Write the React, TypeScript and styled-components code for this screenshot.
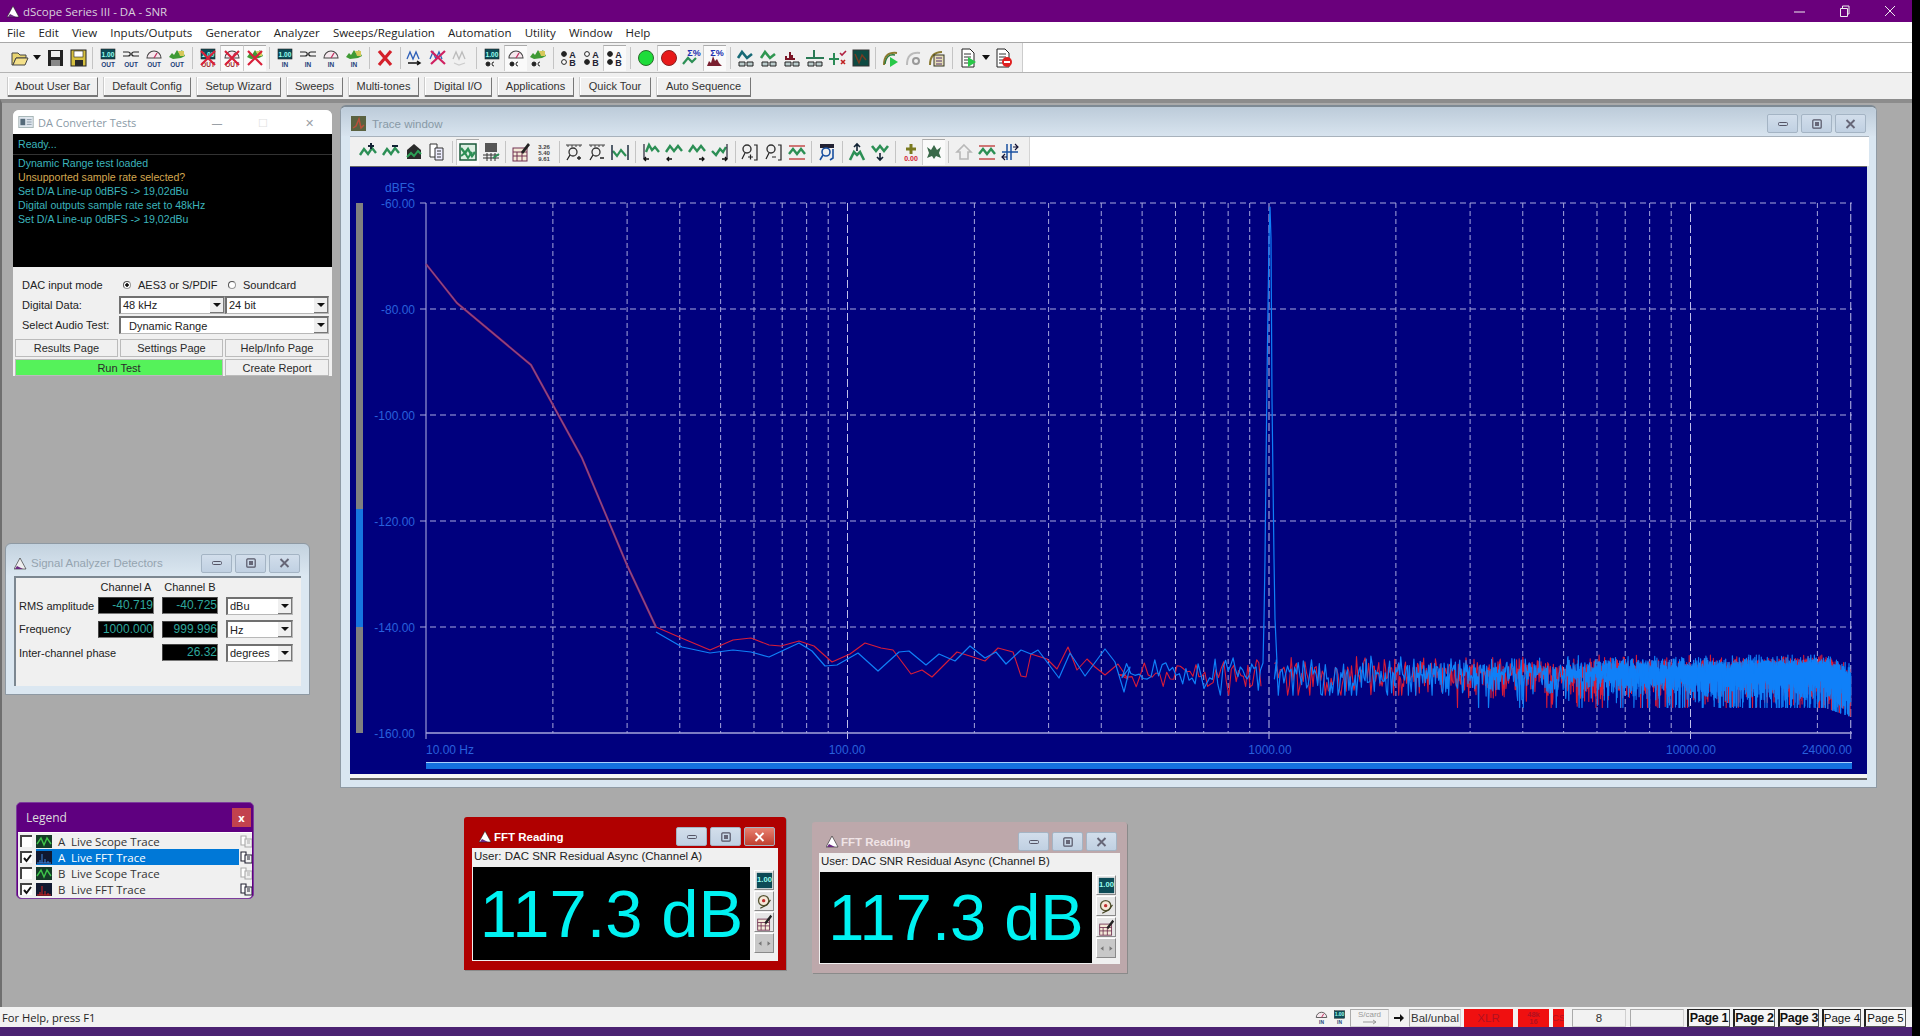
import React from 'react';
import styled, { createGlobalStyle } from 'styled-components';

const GlobalStyle = createGlobalStyle`
  html, body {
    margin: 0;
    padding: 0;
    background: #000;
    overflow: hidden;
  }
  #root {
    width: 1920px;
    height: 1036px;
  }
`;

const ARIAL = `"Liberation Sans", Arial, sans-serif`;
const SEGOE = `"Open Sans", "Noto Sans", sans-serif`;

/* ---------- app shell ---------- */

const Screen = styled.div`
  width: 1912px;
  height: 1036px;
  display: flex;
  flex-direction: column;
  background: #f0f0f0;
  font-family: ${ARIAL};
  color: #111;
`;

const TitleBar = styled.div`
  height: 22px;
  flex: none;
  background: #6a007c;
  color: #d9d0dc;
  display: flex;
  align-items: center;
  padding-left: 7px;
  font: 11.5px ${SEGOE};
`;

const TitleText = styled.span`
  margin-left: 3px;
  flex: 1;
`;

const SysButton = styled.span`
  width: 45px;
  display: flex;
  justify-content: center;
  color: #eee;
`;

const MenuBar = styled.div`
  height: 19px;
  flex: none;
  background: #fff;
  border-top: 1px solid #fff;
  border-bottom: 1px solid #a8a8a8;
  display: flex;
  align-items: center;
  padding-left: 7px;
  gap: 13.2px;
  font: 11.5px ${SEGOE};
  color: #222;
`;

const ToolRow = styled.div`
  height: 29px;
  flex: none;
  background: #fff;
  border-bottom: 1px solid #b4b4b4;
  display: flex;
`;

const ToolStrip = styled.div<{ $width: number }>`
  width: ${(p) => p.$width}px;
  background: #f0f0f0;
  border-right: 1px solid #ccc;
  display: flex;
  align-items: center;
  padding-left: 8px;
  box-sizing: border-box;
`;

const ToolButton = styled.div<{ $on?: boolean; $small?: boolean }>`
  width: ${(p) => (p.$small ? 12 : 23)}px;
  height: 26px;
  flex: none;
  box-sizing: border-box;
  display: flex;
  align-items: center;
  justify-content: center;
  ${(p) =>
    p.$on
      ? 'background: #fafafa; border-top: 1px solid #aaa; border-left: 1px solid #ccc;'
      : ''}
`;

const ToolSep = styled.div`
  width: 1px;
  height: 22px;
  margin: 0 3.4px;
  flex: none;
  background: #c4c4c4;
`;

const TraceSep = styled(ToolSep)`
  margin: 0 3px;
`;

const QuickBar = styled.div`
  height: 26px;
  flex: none;
  background: #f0f0f0;
  display: flex;
  gap: 6px;
  align-items: flex-end;
  padding: 0 0 2px 8px;
  box-sizing: border-box;
`;

const QuickButton = styled.div<{ $width: number }>`
  width: ${(p) => p.$width}px;
  height: 20px;
  box-sizing: border-box;
  background: #f0f0f0;
  border-right: 1px solid #777;
  border-bottom: 2px solid #777;
  border-top: 1px solid #fff;
  box-shadow: inset 1px 0 #fff, -1px 0 #ccc;
  padding-bottom: 1px;
  display: flex;
  align-items: center;
  justify-content: center;
  font-size: 11px;
  color: #333;
`;

const Desktop = styled.div`
  flex: 1;
  position: relative;
  background: #aaaaaa;
  border-top: 4px solid #8c8c8c;
  border-left: 2px solid #6f6f6f;
  overflow: hidden;
`;

/* ---------- status bar ---------- */

const StatusBar = styled.div`
  height: 20px;
  flex: none;
  background: #f2f2f2;
  display: flex;
  align-items: center;
  padding: 1px 6px 0 2px;
  box-sizing: border-box;
  font: 11.2px ${SEGOE};
  color: #222;
`;

const StatusHelp = styled.span`
  flex: 1;
`;

const StatusIcon = styled.span`
  width: 15px;
  height: 15px;
  margin-left: 3px;
  flex: none;
`;

const StatusArrow = styled.svg`
  margin: 0 5px;
  flex: none;
`;

const StatusCell = styled.div<{ $width: number; $red?: boolean; $gap?: number }>`
  width: ${(p) => p.$width}px;
  height: 18px;
  margin-left: ${(p) => p.$gap ?? 3}px;
  flex: none;
  box-sizing: border-box;
  display: flex;
  align-items: center;
  justify-content: center;
  font: 11.5px ${ARIAL};
  background: ${(p) => (p.$red ? '#f01010' : '#f2f2f2')};
  color: ${(p) => (p.$red ? '#b01020' : '#333')};
  border: ${(p) => (p.$red ? 'none' : '1px solid #d0d0d0')};
  border-top-color: #aaa;
  border-left-color: #aaa;
  white-space: nowrap;
  overflow: hidden;
`;

const CardStack = styled.span`
  display: flex;
  flex-direction: column;
  align-items: center;
  font-size: 8px;
  line-height: 8px;
  color: #999;
`;

const RateStack = styled.span`
  font-size: 7.5px;
  line-height: 7px;
  text-align: center;
  font-weight: bold;
`;

const TinyRed = styled.span`
  font-size: 9.5px;
`;

const PageTab = styled.div<{ $width: number; $bold?: boolean }>`
  width: ${(p) => p.$width}px;
  height: 18px;
  margin-left: 3px;
  flex: none;
  box-sizing: border-box;
  border: 1px solid #555;
  border-left: 2px solid #222;
  border-top-color: #222;
  background: #f6f6f6;
  display: flex;
  align-items: center;
  justify-content: center;
  font: ${(p) => (p.$bold ? 'bold 12.5px' : '11.5px')} ${ARIAL};
  letter-spacing: ${(p) => (p.$bold ? '-0.3px' : '0')};
  color: #111;
  white-space: nowrap;
`;

const BottomStrip = styled.div`
  height: 9px;
  flex: none;
  background: #4b2272;
`;

/* ---------- windows on the desktop ---------- */

type Box = { $x: number; $y: number; $w: number; $h: number };

const Win = styled.div<Box>`
  position: absolute;
  left: ${(p) => p.$x}px;
  top: ${(p) => p.$y}px;
  width: ${(p) => p.$w}px;
  height: ${(p) => p.$h}px;
  box-sizing: border-box;
  display: flex;
  flex-direction: column;
`;

const CtlRow = styled.div`
  display: flex;
  gap: 3px;
`;

const Ctl = styled.div<{ $w: number; $bg?: string }>`
  width: ${(p) => p.$w}px;
  height: 19px;
  box-sizing: border-box;
  border: 1px solid #a4b4c4;
  border-radius: 2px;
  background: ${(p) => p.$bg ?? 'linear-gradient(#d2deeb, #c0d0e2)'};
  display: flex;
  align-items: center;
  justify-content: center;
`;

/* trace window */

const TraceWin = styled(Win)`
  background: #d9e6f1;
  border: 1px solid #8f9aa4;
  border-top: 2px solid #7e8a94;
  border-radius: 6px 6px 0 0;
  padding: 0 9px 7px 9px;
`;

const TraceHead = styled.div`
  height: 29px;
  flex: none;
  box-sizing: border-box;
  margin: 0 -9px;
  padding: 4px 10px 0 10px;
  border-radius: 5px 5px 0 0;
  background: linear-gradient(#bccbd9, #d8e4ef);
  display: flex;
  align-items: center;
  font-size: 11.5px;
  color: #8899a6;
`;

const TraceTitle = styled.span`
  flex: 1;
  margin-left: 1px;
`;

const TraceTools = styled.div`
  height: 29px;
  flex: none;
  margin-right: -2px;
  background: #fff;
  border-top: 1px solid #a8b2bc;
  display: flex;
`;

const TraceStrip = styled(ToolStrip)`
  padding-left: 6px;
  border-right: 1px solid #d4d4d4;
`;

const TraceButton = styled(ToolButton)`
  width: 23.2px;
`;

const PlotSvg = styled.svg`
  display: block;
  flex: none;
  border-top: 1px solid #666;
`;

const PlotFoot = styled.div`
  flex: 1;
  background: #f4f4f4;
  border-bottom: 2px solid #666;
`;

/* DA converter tests */

const TestWin = styled(Win)`
  background: #f0f0f0;
  border-radius: 6px 6px 0 0;
`;

const WhiteHead = styled.div`
  height: 24px;
  flex: none;
  padding-left: 5px;
  border-radius: 6px 6px 0 0;
  background: #fff;
  display: flex;
  align-items: center;
  font: 11px ${SEGOE};
  color: #8a9aa6;
`;

const HeadText = styled.span`
  flex: 1;
  margin-left: 4px;
`;

const HeadGlyph = styled.span<{ $faint?: boolean }>`
  width: 46px;
  display: flex;
  justify-content: center;
  color: ${(p) => (p.$faint ? '#e0e0e0' : '#9aa0a6')};
`;

const ConsoleBox = styled.div`
  height: 133px;
  flex: none;
  background: #000;
  padding-left: 5px;
  font-size: 10.6px;
  line-height: 14px;
  color: #3cb4bc;
`;

const ConsoleHead = styled.div`
  height: 21px;
  margin-left: -5px;
  padding-left: 5px;
  box-sizing: border-box;
  border-bottom: 1px solid #333;
  line-height: 21px;
  margin-bottom: 1px;
`;

const ConsoleLine = styled.div<{ $warn?: boolean }>`
  color: ${(p) => (p.$warn ? '#d4a850' : '#3cb4bc')};
`;

const TestForm = styled.div`
  padding: 8px 1px 0 1px;
  font-size: 11px;
  color: #222;
  display: flex;
  flex-direction: column;
`;

const FormRow = styled.div<{ $h: number }>`
  height: ${(p) => p.$h}px;
  display: flex;
  align-items: center;
  padding-left: 8px;
`;

const FormLabel = styled.span`
  width: 97px;
  flex: none;
  white-space: nowrap;
`;

const Radio = styled.span<{ $on?: boolean; $lead?: number }>`
  width: 8px;
  height: 8px;
  margin-left: ${(p) => p.$lead ?? 0}px;
  margin-right: 7px;
  flex: none;
  border-radius: 50%;
  background: #fff;
  box-sizing: border-box;
  border: 1px solid #999;
  border-top-color: #555;
  border-left-color: #555;
  ${(p) => (p.$on ? 'background: radial-gradient(circle, #111 35%, #fff 45%);' : '')}
`;

const RadioText = styled.span<{ $w: number }>`
  width: ${(p) => p.$w}px;
  flex: none;
  white-space: nowrap;
`;

const ComboBox = styled.div<{ $w: number; $inset?: number }>`
  width: ${(p) => p.$w}px;
  height: 18px;
  flex: none;
  box-sizing: border-box;
  background: #fff;
  border: 1px solid #b8b8b8;
  border-top: 2px solid #707070;
  border-left: 2px solid #707070;
  padding-left: ${(p) => p.$inset ?? 2}px;
  display: flex;
  align-items: center;
  justify-content: space-between;
  font-size: 11px;
  color: #222;
  overflow: hidden;
`;

const ComboArrow = styled.span`
  width: 14px;
  height: 15px;
  flex: none;
  box-sizing: border-box;
  background: #efefef;
  border-right: 1px solid #777;
  border-bottom: 1px solid #777;
  display: flex;
  align-items: center;
  justify-content: center;
  &::after {
    content: '';
    border: 4px solid transparent;
    border-top: 4px solid #111;
    border-bottom: 0;
  }
`;

const ButtonRow = styled.div<{ $h: number; $top?: number }>`
  height: ${(p) => p.$h}px;
  display: flex;
  gap: 2px;
  padding-left: 1px;
  margin-top: ${(p) => p.$top ?? 0}px;
  margin-bottom: 2px;
`;

const FlatButton = styled.div<{ $w: number; $green?: boolean }>`
  width: ${(p) => p.$w}px;
  box-sizing: border-box;
  background: ${(p) => (p.$green ? '#55f25a' : '#f0f0f0')};
  border: 1px solid #8a8a8a;
  border-top-color: #fff;
  border-left-color: #fff;
  outline: 1px solid #bbb;
  outline-offset: -1px;
  display: flex;
  align-items: center;
  justify-content: center;
  font-size: 11px;
  color: #2a2a2a;
`;

/* detectors */

const DetectWin = styled(Win)`
  background: linear-gradient(#c3d2df 0, #dbe7f1 32px, #dbe7f1 100%);
  border: 1px solid #8e99a3;
  border-radius: 6px 6px 0 0;
  padding: 0 8px 8px 8px;
`;

const DetectHead = styled.div`
  height: 32px;
  flex: none;
  box-sizing: border-box;
  padding: 6px 1px 0 0;
  display: flex;
  align-items: center;
  font-size: 11.5px;
  color: #95a4b0;
`;

const DetectBody = styled.div`
  flex: 1;
  background: #f0f0f0;
  border-top: 2px solid #7c8791;
  border-left: 2px solid #7c8791;
  padding: 1px 0 0 3px;
  font-size: 11px;
  color: #222;
`;

const DetectGrid = styled.div<{ $row: number }>`
  display: grid;
  grid-template-columns: 71px 56px 56px 67px;
  grid-auto-rows: ${(p) => p.$row}px;
  column-gap: 8px;
  align-items: center;
`;

const ColHead = styled.span`
  text-align: center;
  white-space: nowrap;
`;

const RowLabel = styled.span`
  white-space: nowrap;
`;

const ReadOut = styled.span`
  height: 17px;
  box-sizing: border-box;
  background: #000;
  border: 1px solid #777;
  border-top-color: #444;
  border-left-color: #444;
  color: #2ea79c;
  font-size: 12px;
  line-height: 15px;
  text-align: right;
  overflow: hidden;
`;

/* legend */

const LegendWin = styled(Win)`
  background: #5f0080;
  border-radius: 5px;
  padding: 0 1px;
  border: 1px solid #7c3c9c;
`;

const LegendHead = styled.div`
  height: 29px;
  flex: none;
  padding: 0 1px 0 8px;
  display: flex;
  align-items: center;
  justify-content: space-between;
  font: 12px ${SEGOE};
  color: #ddd;
`;

const LegendClose = styled.span`
  width: 19px;
  height: 19px;
  background: #c2424e;
  color: #fff;
  font: bold 11px ${SEGOE};
  display: flex;
  align-items: center;
  justify-content: center;
`;

const LegendList = styled.div`
  flex: 1;
  background: #f0f0f0;
  border-top: 1px solid #fff;
  border-radius: 0 0 4px 4px;
  overflow: hidden;
`;

const LegendRow = styled.div`
  height: 16px;
  display: flex;
  align-items: center;
  padding-left: 2px;
  font: 11.5px ${SEGOE};
  color: #333;
`;

const LegendBox = styled.span`
  width: 12px;
  height: 12px;
  margin-right: 4px;
  flex: none;
  box-sizing: border-box;
  background: #fff;
  border-top: 2px solid #444;
  border-left: 2px solid #444;
  display: flex;
  align-items: center;
  justify-content: center;
`;

const LegendEntry = styled.span<{ $selected?: boolean }>`
  width: 203px;
  height: 16px;
  flex: none;
  display: flex;
  align-items: center;
  background: ${(p) => (p.$selected ? '#0078d7' : 'transparent')};
  color: ${(p) => (p.$selected ? '#fff' : '#333')};
  white-space: pre;
`;

const ChanLetter = styled.span`
  width: 13px;
  margin-left: 1px;
`;

/* FFT readings */

const ReadingWin = styled(Win)<{ $frame: string; $pad: number }>`
  background: ${(p) => p.$frame};
  border-radius: 3px 3px 0 0;
  padding: 0 ${(p) => p.$pad}px 9px ${(p) => p.$pad}px;
  box-shadow: 1px 1px 0 #8a8a8a;
`;

const ReadingHead = styled.div`
  height: 31px;
  flex: none;
  box-sizing: border-box;
  padding: 8px 3px 0 7px;
  display: flex;
  align-items: center;
  justify-content: space-between;
  font-size: 11.5px;
  font-weight: bold;
  color: #fff;
`;

const ReadingName = styled.span<{ $faint?: boolean }>`
  display: flex;
  align-items: center;
  gap: 2px;
  color: ${(p) => (p.$faint ? '#f0e4e6' : '#fff')};
`;

const ReadingSub = styled.div`
  height: 18px;
  flex: none;
  background: #f0f0f0;
  padding-left: 2px;
  font-size: 11.5px;
  line-height: 17px;
  color: #222;
`;

const ReadingBody = styled.div`
  flex: 1;
  display: flex;
  background: #f0f0f0;
  min-height: 0;
`;

const BigValue = styled.div<{ $size: number }>`
  flex: 1;
  margin: 1px 0 1px 1px;
  background: #000;
  color: #00f2f2;
  font: ${(p) => p.$size}px ${ARIAL};
  display: flex;
  align-items: center;
  justify-content: center;
  white-space: nowrap;
`;

const SideColumn = styled.div`
  width: 28px;
  flex: none;
  display: flex;
  flex-direction: column;
  align-items: center;
  padding-top: 4px;
  gap: 1px;
`;

const SideButton = styled.div<{ $off?: boolean }>`
  width: 20px;
  height: 20px;
  box-sizing: border-box;
  background: ${(p) => (p.$off ? '#c8c8c8' : '#e6e6e6')};
  border: 1px solid #8a8a8a;
  border-top-color: #fff;
  border-left-color: #fff;
  display: flex;
  align-items: center;
  justify-content: center;
`;

/* ---------- small icons ---------- */

const Glyph: React.FC<{ size?: number; children: React.ReactNode }> = ({
  size = 20,
  children,
}) => (
  <svg width={size} height={size} viewBox="0 0 20 20" fill="none">
    {children}
  </svg>
);

const GREEN = '#2c8f55';
const wave = (color = GREEN, w = 2.4, d = 'M2 13l4-6 4 5 4-6 4 5') => (
  <path d={d} stroke={color} strokeWidth={w} />
);
const tag = (t: string, c = '#1d3f78') => (
  <text x="10" y="19" fontSize="6.5" fontWeight="bold" fontFamily={ARIAL} textAnchor="middle" fill={c}>
    {t}
  </text>
);
const cross = <path d="M3 3l14 14M17 3L3 17" stroke="#d8203a" strokeWidth="2.2" />;
const arrowL = <path d="M8 17H3m2-2-2 2 2 2" stroke="#111" strokeWidth="1.3" />;
const arrowR = <path d="M12 17h5m-2-2 2 2-2 2" stroke="#111" strokeWidth="1.3" />;

const ledTop = (
  <>
    <rect x="3" y="1" width="14" height="10" fill="#0c4a56" stroke="#222" strokeWidth=".6" />
    <text x="10" y="8.5" fontSize="6.6" fontWeight="bold" fontFamily={ARIAL} textAnchor="middle" fill="#9fe">
      1.00
    </text>
  </>
);
const connTop = <path d="M2 4h5c3 0 3 4 0 4H2m16-4h-5c-3 0-3 4 0 4h5" stroke="#222" strokeWidth="1.2" />;
const gaugeTop = (
  <>
    <path d="M3 10a7 7 0 1 1 14 0z" fill="#f6e8ee" stroke="#444" strokeWidth="1.1" />
    <path d="M10 10l3-5" stroke="#c03060" strokeWidth="1.3" />
  </>
);
const treeTop = (
  <>
    <path d="M2 9l3-4 2 2 3-5 2 3 3-3 3 6-4 2-8 1z" fill="#3f9a35" />
    <path d="M11 3h6v5h-4z" fill="#d6c85a" />
  </>
);
const abRadio = (onA: boolean, onB: boolean, s = 'AB') => (
  <>
    <circle cx="5" cy="6" r="2.4" stroke="#222" fill={onA ? '#222' : '#fff'} />
    <circle cx="5" cy="14" r="2.4" stroke="#222" fill={onB ? '#222' : '#fff'} />
    <text x="13.5" y="9.5" fontSize="9" fontWeight="bold" fontFamily={ARIAL} textAnchor="middle" fill="#223">
      {s[0]}
    </text>
    <text x="13.5" y="18" fontSize="9" fontWeight="bold" fontFamily={ARIAL} textAnchor="middle" fill="#223">
      {s[1]}
    </text>
  </>
);
const radioPair = (
  <>
    <circle cx="6" cy="16" r="2" stroke="#222" fill="#222" />
    <path d="M12 18a2 2 0 0 1 0-4" stroke="#222" />
  </>
);
const doc = (
  <>
    <path d="M4 1h8l4 4v14H4z" fill="#fff" stroke="#222" />
    <path d="M6 6h7M6 9h7M6 12h6M6 15h6" stroke="#333" />
  </>
);

const icons: Record<string, React.ReactNode> = {
  folder: (
    <>
      <path d="M2 5h6l2 2h6v3H6l-3 7H2z" fill="#e8d470" stroke="#444" />
      <path d="M6 10h12l-3 7H3z" fill="#f4e08a" stroke="#444" />
    </>
  ),
  save: (
    <>
      <rect x="3" y="2" width="15" height="16" fill="#222" />
      <rect x="6" y="3" width="9" height="6" fill="#eee" />
      <rect x="6" y="12" width="9" height="6" fill="#888" />
    </>
  ),
  saveY: (
    <>
      <rect x="3" y="2" width="15" height="16" fill="#d6c040" stroke="#222" />
      <rect x="6" y="3" width="9" height="6" fill="#fff" stroke="#222" strokeWidth=".6" />
      <rect x="7" y="12" width="8" height="6" fill="#2a2a2a" />
    </>
  ),
  ledOut: <>{ledTop}{tag('OUT')}</>,
  connOut: <>{connTop}{tag('OUT')}</>,
  gaugeOut: <>{gaugeTop}{tag('OUT')}</>,
  treeOut: <>{treeTop}{tag('OUT')}</>,
  ledOutX: <>{ledTop}{tag('OUT', '#a03030')}{cross}</>,
  gaugeOutX: <>{gaugeTop}{tag('OUT', '#a03030')}{cross}</>,
  treeOutX: <>{treeTop}{cross}</>,
  ledIn: <>{ledTop}{tag('IN')}</>,
  connIn: <>{connTop}{tag('IN')}</>,
  gaugeIn: <>{gaugeTop}{tag('IN')}</>,
  treeIn: <>{treeTop}{tag('IN')}</>,
  redX: <path d="M4 3l12 14M16 3L4 17" stroke="#d4202a" strokeWidth="3.2" />,
  scope: (
    <>
      {wave('#2d5fb8', 1.3, 'M2 11l3-7 3 7 3-7 3 7')}
      <path d="M3 15h12m-3-2 3 2-3 2" stroke="#111" strokeWidth="1.5" />
    </>
  ),
  scopeX: (
    <>
      {wave('#2d5fb8', 1.3, 'M2 11l3-7 3 7 3-7 3 7')}
      <path d="M3 3l14 13M17 3L3 16" stroke="#d02060" strokeWidth="2.2" />
    </>
  ),
  scopeOff: (
    <>
      {wave('#bbb', 1.3, 'M2 11l3-7 3 7 3-7 3 7')}
      <path d="M3 15l5 2 6-2" stroke="#ccc" strokeWidth="1.3" />
    </>
  ),
  ledRad: <>{ledTop}{radioPair}</>,
  gaugeRad: <>{gaugeTop}{radioPair}</>,
  treeRad: <>{treeTop}{radioPair}</>,
  abA: abRadio(true, false),
  abB: abRadio(false, true),
  abAB: abRadio(true, true),
  green: <circle cx="10" cy="10" r="7.5" fill="#1edc3a" stroke="#2a6a2a" />,
  red: <circle cx="10" cy="10" r="7.5" fill="#e81a1a" stroke="#8a2020" />,
  sigma: (
    <>
      {wave(GREEN, 2.2, 'M1 16l5-6 4 4 4-4')}
      <text x="12" y="8" fontSize="9" fontWeight="bold" fontFamily={ARIAL} textAnchor="middle" fill="#2030b0">
        Σ%
      </text>
    </>
  ),
  sigmaPeak: (
    <>
      <path d="M2 18l2-5 2 2 2-7 2 5 2-2 2 4 3 3z" fill="#7a2030" />
      <text x="12" y="8" fontSize="9" fontWeight="bold" fontFamily={ARIAL} textAnchor="middle" fill="#2030b0">
        Σ%
      </text>
    </>
  ),
  bank1: (
    <>
      {wave('#176a76', 2.6, 'M2 10l4-6 5 6 5-4')}
      <path d="M3 14h6v4H3zm8 0h6v4h-6z" fill="#bcc" stroke="#222" />
    </>
  ),
  bank2: (
    <>
      {wave('#2f9650', 2.6, 'M2 10l4-6 5 6 5-4')}
      <path d="M3 14h6v4H3zm8 0h6v4h-6z" fill="#bcc" stroke="#222" />
    </>
  ),
  bank3: (
    <>
      <path d="M1 12h2V8h2v2h2V4h2v3h2v3h2v2h4z" fill="#7a1526" />
      <path d="M3 14h6v4H3zm8 0h6v4h-6z" fill="#bcc" stroke="#222" />
    </>
  ),
  bank4: (
    <>
      <path d="M1 10h18M9 2v8" stroke="#2a7a55" strokeWidth="2" />
      <path d="M3 14h6v4H3zm8 0h6v4h-6z" fill="#bcc" stroke="#222" />
    </>
  ),
  check: (
    <>
      <path d="M1 11h10M6 5v12" stroke="#2a8a55" strokeWidth="2" />
      <path d="M12 5l2 2 4-4" stroke="#b02040" strokeWidth="1.6" />
      <path d="M13 12l4 4m0-4-4 4" stroke="#c02020" strokeWidth="1.6" />
    </>
  ),
  scr: (
    <>
      <rect x="2" y="2" width="16" height="16" fill="#0e4a42" stroke="#333" />
      <path d="M4 6l4 9 3-8 4 5" stroke="#7a3a20" strokeWidth="1.4" />
    </>
  ),
  runA: (
    <>
      <path d="M3 17c0-9 4-13 13-12" stroke="#8a7a30" strokeWidth="2" />
      <path d="M4 16c1-7 4-10 10-9" stroke="#2a7a3a" strokeWidth="1.4" />
      <path d="M9 9l8 5-8 5z" fill="#28c848" />
    </>
  ),
  runOff: (
    <>
      <path d="M3 17c0-9 4-13 13-12" stroke="#bbb" strokeWidth="2" />
      <circle cx="12" cy="13" r="3" stroke="#999" strokeWidth="2" />
    </>
  ),
  runEdit: (
    <>
      <path d="M3 17c0-9 4-13 12-13" stroke="#8a7a30" strokeWidth="2" />
      <rect x="7" y="7" width="10" height="11" fill="#e6ddb8" stroke="#332" />
      <path d="M9 10h6M9 13h6M9 16h6" stroke="#503070" />
    </>
  ),
  docRun: <>{doc}<path d="M10 9l8 5-8 5z" fill="#28c848" /></>,
  docStop: (
    <>
      {doc}
      <circle cx="14" cy="14" r="5" fill="#e02020" />
      <path d="M11 14h6" stroke="#fff" strokeWidth="2" />
    </>
  ),
  waveAdd: <>{wave()}<path d="M13 1v6M10 4h6" stroke="#123" strokeWidth="2" /></>,
  waveSub: <>{wave()}<path d="M11 4h6" stroke="#123" strokeWidth="2" /></>,
  waveSave: (
    <>
      <path d="M3 17V8l7-6 7 6v9z" fill="#2a2a2a" />
      {wave('#2c9f55', 2, 'M3 15l4-4 3 3 4-5 3 3')}
    </>
  ),
  copy: (
    <>
      <path d="M3 2h7v13H3z" fill="#fff" stroke="#333" />
      <path d="M8 6h8v12H8z" fill="#eef" stroke="#333" />
      <path d="M10 9h4M10 12h4M10 15h4" stroke="#333" />
    </>
  ),
  gridWave: (
    <>
      <rect x="2" y="2" width="16" height="16" fill="#dcefe2" stroke="#1a5a3a" strokeWidth="1.5" />
      {wave(GREEN, 2.4, 'M3 6l4 5 3-4 4 7 3-4')}
      {wave(GREEN, 2, 'M3 14l4-3 3 5 4-6')}
    </>
  ),
  gridTable: (
    <>
      <path d="M4 1h12v9H4z" fill="#555" />
      <path d="M2 13h16M2 16h16M6 11v8M10 11v8M14 11v8" stroke="#333" />
      <path d="M12 16l6-4" stroke={GREEN} strokeWidth="2" />
    </>
  ),
  calc: (
    <>
      <rect x="2" y="6" width="14" height="13" fill="#f4ead8" stroke="#703050" />
      <path d="M2 10h14M6 10v9M11 10v9M2 14h14" stroke="#703050" />
      <path d="M10 10l7-9 2 2-7 9z" fill="#222" />
    </>
  ),
  nums: (
    <text x="10" y="7" fontSize="6" fontWeight="bold" fontFamily={ARIAL} textAnchor="middle" fill="#444">
      3.26
      <tspan x="10" dy="6">5.40</tspan>
      <tspan x="10" dy="6">9.61</tspan>
    </text>
  ),
  rulePlus: (
    <>
      <path d="M2 3h16M4 3v2M8 3v2M12 3v2M16 3v2" stroke="#444" />
      <circle cx="9" cy="10" r="4" stroke="#333" strokeWidth="1.3" />
      <path d="M6 13l-3 5M13 16h4M15 14v4" stroke="#222" strokeWidth="1.3" />
    </>
  ),
  ruleMinus: (
    <>
      <path d="M2 3h16M4 3v2M8 3v2M12 3v2M16 3v2" stroke="#444" />
      <circle cx="9" cy="10" r="4" stroke="#333" strokeWidth="1.3" />
      <path d="M6 13l-3 5M13 16h4" stroke="#222" strokeWidth="1.3" />
    </>
  ),
  waveBars: (
    <>
      {wave(GREEN, 2.2, 'M3 9l4 5 4-6 5 6')}
      <path d="M2 3v15M18 3v15" stroke="#123" strokeWidth="1.4" />
    </>
  ),
  wL: <>{wave(GREEN, 2.4, 'M5 10l3-7 3 5 3-3 4 5')}<path d="M3 2v15" stroke="#223" strokeWidth="1.2" />{arrowL}</>,
  wD: <>{wave(GREEN, 2.4, 'M2 10l4-6 4 5 4-5 4 5')}{arrowL}</>,
  wR: <>{wave(GREEN, 2.4, 'M2 10l4-6 4 5 4-5 4 5')}{arrowR}</>,
  wRb: <>{wave(GREEN, 2.4, 'M2 9l4 4 4-6 3 3 3-5')}<path d="M17 2v15" stroke="#223" strokeWidth="1.2" />{arrowR}</>,
  magPlus: (
    <>
      <circle cx="7" cy="7" r="4" stroke="#333" strokeWidth="1.4" />
      <path d="M5 11l-3 6M8 15h5M10.5 12.5v5M14 3h3v15h-3" stroke="#222" strokeWidth="1.2" />
    </>
  ),
  magMinus: (
    <>
      <circle cx="7" cy="7" r="4" stroke="#333" strokeWidth="1.4" />
      <path d="M5 11l-3 6M8 15h4M14 3h3v15h-3" stroke="#222" strokeWidth="1.2" />
    </>
  ),
  waveLines: (
    <>
      <path d="M2 4h16" stroke="#c04040" strokeWidth="1.4" />
      {wave(GREEN, 2.4, 'M2 12l4-5 4 5 4-5 4 5')}
      <path d="M2 17h16" stroke="#c04040" strokeWidth="1.4" />
    </>
  ),
  magBlue: (
    <>
      <path d="M3 2h14v4H3z" fill="#223" />
      <circle cx="9" cy="10" r="4" stroke="#1a50a0" strokeWidth="1.6" />
      <path d="M6 13l-3 5M16 7v9l-3 2" stroke="#1a50a0" strokeWidth="1.6" />
    </>
  ),
  wUp: <>{wave(GREEN, 2.6, 'M3 18l4-8 3 3 3-3 4 8')}<path d="M10 9V2m-3 3 3-3 3 3" stroke="#123" strokeWidth="1.6" /></>,
  wDn: <>{wave(GREEN, 2.6, 'M2 4l4 5 4-5 4 5 4-5')}<path d="M10 11v7m-3-3 3 3 3-3" stroke="#123" strokeWidth="1.6" /></>,
  zero: (
    <>
      <path d="M10 2v10M5 7h10" stroke="#7a7a20" strokeWidth="3" />
      <text x="10" y="19" fontSize="7" fontWeight="bold" fontFamily={ARIAL} textAnchor="middle" fill="#d02030">
        0.00
      </text>
    </>
  ),
  star: <path d="M3 5l4 3 3-5 3 5 4-3-2 6 2 5-5-2-2 3-2-3-5 2 2-5z" fill="#3a6a4a" />,
  homeOff: <path d="M10 3l7 7h-3v7H6v-7H3z" stroke="#b8b8b8" strokeWidth="1.6" />,
  bars: (
    <>
      <path d="M7 2v16M11 2v16" stroke="#1a50a0" strokeWidth="1.5" />
      <path d="M2 10h16" stroke="#1a50a0" strokeWidth="1.5" />
      <path d="M13 5h5m-3-3 3 3-3 3M7 15H2m3-3-3 3 3 3" stroke="#113" strokeWidth="1.2" />
    </>
  ),
};

const DropTriangle = () => (
  <svg width="8" height="5" viewBox="0 0 8 5">
    <path d="M0 0h8L4 5z" fill="#111" />
  </svg>
);

const DashIcon = () => (
  <svg width="10" height="6" viewBox="0 0 10 6" fill="none">
    <rect x=".5" y="1.5" width="9" height="3" rx="1" stroke="#556" />
  </svg>
);
const RestoreIcon = () => (
  <svg width="10" height="10" viewBox="0 0 10 10" fill="none">
    <rect x=".8" y=".8" width="8.4" height="8.4" rx="1" stroke="#556" strokeWidth="1.2" />
    <rect x="3" y="3" width="4" height="4" fill="#667" />
  </svg>
);
const CloseIcon: React.FC<{ color?: string }> = ({ color = '#667' }) => (
  <svg width="11" height="10" viewBox="0 0 11 10" fill="none">
    <path d="M1.500 1l8 8M9.500 1l-8 8" stroke={color} strokeWidth="1.9" />
  </svg>
);

const Warn: React.FC<{ fill?: string }> = ({ fill = '#fff' }) => (
  <svg width="13" height="13" viewBox="0 0 13 13">
    <path d="M6 1l6 11H0z" fill={fill} stroke="#222" strokeWidth=".6" />
    <path d="M3 9l6 3H1z" fill="#6a2a80" />
  </svg>
);

const TraceGlyph = styled.svg`
  flex: none;
  margin-right: 5px;
`;

const TraceIcon: React.FC<{ mode: 'wave' | 'blue' | 'red' }> = ({ mode }) => (
  <TraceGlyph width="16" height="13" viewBox="0 0 16 13" fill="none">
    <rect width="16" height="13" fill={mode === 'wave' ? '#143a26' : '#101830'} />
    {mode === 'wave' ? (
      <path d="M1 9l4-6 3 7 3-7 4 6" stroke="#3ec44a" strokeWidth="1.4" />
    ) : (
      <path d="M1 12h14M6 12V3M4 12V9M9 12V8M12 12v-2" stroke={mode === 'blue' ? '#3a86e0' : '#d82020'} />
    )}
  </TraceGlyph>
);

const TraceLogo = () => (
  <TraceGlyph width="15" height="15" viewBox="0 0 15 15" fill="none">
    <rect width="15" height="15" fill="#5a6240" />
    <path d="M2 12l3-2 3-7 2 9 3-3" stroke="#b8503a" strokeWidth="1.5" />
  </TraceGlyph>
);

const CopyGlyph = styled.svg`
  flex: none;
  margin-left: 1px;
`;

const CopyIcon: React.FC<{ faint?: boolean }> = ({ faint }) => (
  <CopyGlyph width="13" height="13" viewBox="0 0 13 13" fill="none">
    <g stroke={faint ? '#aaa' : '#223'} strokeWidth="1.1">
      <path d="M1 1h5v9H1z" fill="#fff" />
      <path d="M5 4h7v8H5z" fill="#f0f0f0" />
      <path d="M7 6h3M7 8h3" />
    </g>
  </CopyGlyph>
);

/* ---------- toolbars data ---------- */

type ToolItem = string | { k: string; on?: boolean; small?: boolean };

const mainTools: ToolItem[] = [
  'folder', { k: 'drop', small: true }, 'save', 'saveY', '|',
  'ledOut', 'connOut', 'gaugeOut', 'treeOut', '|',
  'ledOutX', { k: 'gaugeOutX', on: true }, { k: 'treeOutX', on: true }, '|',
  'ledIn', 'connIn', 'gaugeIn', 'treeIn', '|',
  'redX', '|',
  'scope', 'scopeX', 'scopeOff', '|',
  'ledRad', { k: 'gaugeRad', on: true }, 'treeRad', '|',
  'abA', 'abB', { k: 'abAB', on: true }, '|',
  'green', { k: 'red', on: true }, 'sigma', { k: 'sigmaPeak', on: true }, '|',
  'bank1', 'bank2', 'bank3', 'bank4', 'check', 'scr', '|',
  'runA', 'runOff', 'runEdit', '|',
  'docRun', { k: 'drop', small: true }, 'docStop',
];

const traceTools: ToolItem[] = [
  'waveAdd', 'waveSub', 'waveSave', 'copy', '|',
  { k: 'gridWave', on: true }, 'gridTable', '|',
  'calc', 'nums', '|',
  'rulePlus', 'ruleMinus', 'waveBars', '|',
  'wL', 'wD', 'wR', 'wRb', '|',
  'magPlus', 'magMinus', 'waveLines', '|',
  'magBlue', '|',
  'wUp', 'wDn', '|',
  'zero', { k: 'star', on: true }, '|',
  'homeOff', 'waveLines', 'bars',
];

const renderTools = (items: ToolItem[], Btn: typeof ToolButton, Sep: typeof ToolSep) =>
  items.map((it, i) => {
    if (it === '|') return <Sep key={i} />;
    const o = typeof it === 'string' ? { k: it } : it;
    return (
      <Btn key={i} $on={o.on} $small={o.small}>
        {o.k === 'drop' ? <DropTriangle /> : <Glyph>{icons[o.k]}</Glyph>}
      </Btn>
    );
  });

const menus = [
  'File', 'Edit', 'View', 'Inputs/Outputs', 'Generator', 'Analyzer',
  'Sweeps/Regulation', 'Automation', 'Utility', 'Window', 'Help',
];

const quickButtons: [string, number][] = [
  ['About User Bar', 90], ['Default Config', 87], ['Setup Wizard', 84],
  ['Sweeps', 56], ['Multi-tones', 70], ['Digital I/O', 67],
  ['Applications', 76], ['Quick Tour', 71], ['Auto Sequence', 94],
];

/* ---------- chart data ---------- */

const X10 = 426;
const DECADE = 421.5;
const xOf = (f: number) => X10 + DECADE * Math.log10(f / 10);
const yOf = (db: number) => 204 + (-60 - db) * 5.3;

const rng = (seed: number) => () => {
  seed = (seed + 0x6d2b79f5) | 0;
  let t = Math.imul(seed ^ (seed >>> 15), 1 | seed);
  t = (t + Math.imul(t ^ (t >>> 7), 61 | t)) ^ t;
  return ((t ^ (t >>> 14)) >>> 0) / 4294967296;
};

const toPath = (pts: number[][]) =>
  pts.map((p, i) => `${i ? 'L' : 'M'}${p[0].toFixed(1)} ${p[1].toFixed(1)}`).join('');

// FFT noise floor, bins are linear in frequency so they bunch up to the right
const noise = (seed: number, fromHz: number, toHz: number) => {
  const r = rng(seed);
  const pts: number[][] = [];
  for (let f = fromHz; f <= toHz; f += 11) {
    const x = xOf(f);
    const centre = 672 + (x > 1825 ? (x - 1825) * 0.35 : 0);
    const deepest = x < 1450 ? 0.94 : 0.985;
    const u = Math.min(Math.max(r(), 0.002), deepest);
    pts.push([x, centre - 20 * Math.log10(-Math.log(u))]);
  }
  return pts;
};

const sharedRise = [[426, 265], [457, 304], [531, 366], [582, 459], [627, 566], [656, 628]];

const redLow = [
  [656, 628], [679, 638], [710, 651], [733, 641], [751, 639], [769, 646], [781, 647],
  [799, 642], [814, 647], [832, 663], [850, 655], [865, 644], [881, 649], [893, 651],
  [911, 675], [922, 671], [932, 678], [957, 653], [973, 658], [985, 662], [998, 649],
  [1013, 653], [1021, 677], [1026, 678], [1031, 655], [1047, 660], [1057, 670], [1068, 648],
  [1077, 671], [1087, 660], [1095, 668], [1105, 676], [1118, 665], [1128, 680],
];

const blueLow = [
  [656, 633], [682, 648], [710, 654], [733, 651], [751, 653], [769, 658], [799, 644],
  [812, 652], [825, 667], [837, 666], [858, 654], [878, 672], [899, 653], [909, 652],
  [926, 666], [939, 655], [955, 662], [970, 647], [985, 659], [996, 653], [1006, 665],
  [1021, 651], [1031, 655], [1038, 651], [1059, 679], [1070, 654], [1085, 677], [1105, 650],
  [1115, 663], [1124, 693], [1130, 668],
];

const bluePeak = [
  [1263, 664], [1264, 620], [1265, 560], [1267, 380], [1269, 240], [1270, 208], [1271, 240],
  [1272, 400], [1274, 560], [1275, 620], [1277, 664],
];

const redPath = toPath([
  ...redLow,
  ...noise(11, 440, 960),
]) + toPath(noise(23, 1030, 24000));
const bluePath = toPath([
  ...blueLow,
  ...noise(47, 448, 960),
  ...bluePeak,
  ...noise(91, 1030, 24000),
]);
// second pass over the top end, the blue band reads as solid there
const blueDense = toPath(noise(131, 6000, 24000));

const vLines: number[] = [];
[10, 100, 1000, 10000].forEach((d) => {
  for (let m = 2; m <= 9; m++) if (d * m <= 24000) vLines.push(d * m);
});

const BLUE_TEXT = '#2860dc';

const Chart = () => (
  <PlotSvg width={1517} height={607} viewBox="350 168 1517 607">
    <rect x="350" y="168" width="1517" height="607" fill="#00007e" />
    <rect x="356" y="204" width="7" height="530" fill="#808080" />
    <rect x="356" y="510" width="7" height="118" fill="#1676e0" />
    {[-60, -80, -100, -120, -140, -160].map((db) => (
      <g key={db}>
        {db !== -160 && (
          <line x1={420} x2={1852} y1={yOf(db)} y2={yOf(db)} stroke="#aaaade" strokeDasharray="6 4" />
        )}
        <text x="415" y={yOf(db) + 4.5} fontSize="12" fontFamily={ARIAL} textAnchor="end" fill={BLUE_TEXT}>
          {db}.00
        </text>
      </g>
    ))}
    <text x="415" y="193" fontSize="12" fontFamily={ARIAL} textAnchor="end" fill={BLUE_TEXT}>
      dBFS
    </text>
    <line x1={X10} x2={X10} y1={204} y2={740} stroke="#b4b4e4" />
    {vLines.map((f) => (
      <line key={f} x1={xOf(f)} x2={xOf(f)} y1={204} y2={734} stroke="#a6a6dc" strokeDasharray="5 3" />
    ))}
    {[100, 1000, 10000, 24000].map((f) => (
      <line key={f} x1={xOf(f)} x2={xOf(f)} y1={204} y2={741} stroke="#c0c0ea" strokeDasharray="8 3" />
    ))}
    <line x1={X10} x2={1852} y1={734} y2={734} stroke="#a4a4dc" strokeWidth="1.5" />
    <path d={toPath(sharedRise)} stroke="#b02850" strokeWidth="2" fill="none" />
    <path d={toPath(sharedRise)} stroke="#3a78e8" strokeOpacity=".55" strokeWidth="1" fill="none" />
    <path d={redPath} stroke="#d81c38" strokeWidth="1.1" fill="none" strokeLinejoin="round" />
    <path d={bluePath} stroke="#0f80f8" strokeWidth="1.2" fill="none" strokeLinejoin="round" />
    <path d={blueDense} stroke="#0f80f8" strokeWidth="1.1" fill="none" strokeLinejoin="round" />
    <text x="426" y="755" fontSize="12" fontFamily={ARIAL} fill={BLUE_TEXT}>10.00 Hz</text>
    <text x="847" y="755" fontSize="12" fontFamily={ARIAL} textAnchor="middle" fill={BLUE_TEXT}>100.00</text>
    <text x="1270" y="755" fontSize="12" fontFamily={ARIAL} textAnchor="middle" fill={BLUE_TEXT}>1000.00</text>
    <text x="1691" y="755" fontSize="12" fontFamily={ARIAL} textAnchor="middle" fill={BLUE_TEXT}>10000.00</text>
    <text x="1852" y="755" fontSize="12" fontFamily={ARIAL} textAnchor="end" fill={BLUE_TEXT}>24000.00</text>
    <rect x="426" y="763" width="1426" height="7" fill="#1470e0" />
    <rect x="426" y="763" width="1426" height="1" fill="#a8d0ff" />
  </PlotSvg>
);

/* ---------- parts ---------- */

const Combo: React.FC<{ w: number; value: string; inset?: number }> = ({ w, value, inset }) => (
  <ComboBox $w={w} $inset={inset}>
    {value}
    <ComboArrow />
  </ComboBox>
);

const WindowButtons: React.FC<{ w: number; closeBg?: string; closeColor?: string }> = ({
  w,
  closeBg,
  closeColor,
}) => (
  <CtlRow>
    <Ctl $w={w}><DashIcon /></Ctl>
    <Ctl $w={w}><RestoreIcon /></Ctl>
    <Ctl $w={w} $bg={closeBg}><CloseIcon color={closeColor} /></Ctl>
  </CtlRow>
);

const ledIcon = (
  <Glyph size={17}>
    <rect x="1" y="1" width="18" height="18" fill="#0c4a56" />
    <text x="10" y="12" fontSize="9" fontWeight="bold" fontFamily={ARIAL} textAnchor="middle" fill="#9fe">1.00</text>
  </Glyph>
);
const dialIcon = (
  <Glyph size={17}>
    <circle cx="9" cy="9" r="6" fill="#f6e8d8" stroke="#553" strokeWidth="1.5" />
    <circle cx="9" cy="9" r="2" fill="#c03030" />
    <path d="M5 18l8-4 4-6" stroke="#442" strokeWidth="1.4" />
  </Glyph>
);

const Reading: React.FC<{
  box: Box;
  frame: string;
  pad: number;
  channel: string;
  closeBg: string;
  closeColor: string;
  size: number;
  faint?: boolean;
}> = ({ box, frame, pad, channel, closeBg, closeColor, size, faint }) => (
  <ReadingWin {...box} $frame={frame} $pad={pad}>
    <ReadingHead>
      <ReadingName $faint={faint}>
        <Warn />
        FFT Reading
      </ReadingName>
      <WindowButtons w={31} closeBg={closeBg} closeColor={closeColor} />
    </ReadingHead>
    <ReadingSub>User: DAC SNR Residual Async (Channel {channel})</ReadingSub>
    <ReadingBody>
      <BigValue $size={size}>117.3 dB</BigValue>
      <SideColumn>
        <SideButton>{ledIcon}</SideButton>
        <SideButton>{dialIcon}</SideButton>
        <SideButton><Glyph size={17}>{icons.calc}</Glyph></SideButton>
        <SideButton $off>
          <Glyph size={15}>
            <path d="M2 10l4-3v6zM18 10l-4-3v6z" fill="#777" />
          </Glyph>
        </SideButton>
      </SideColumn>
    </ReadingBody>
  </ReadingWin>
);

const legendRows = [
  { ch: 'A', name: 'Live Scope Trace', mode: 'wave' as const, on: false },
  { ch: 'A', name: 'Live FFT Trace', mode: 'blue' as const, on: true, selected: true },
  { ch: 'B', name: 'Live Scope Trace', mode: 'wave' as const, on: false },
  { ch: 'B', name: 'Live FFT Trace', mode: 'red' as const, on: true },
];

const consoleLines = [
  { t: 'Dynamic Range test loaded' },
  { t: 'Unsupported sample rate selected?', warn: true },
  { t: 'Set D/A Line-up 0dBFS -> 19,02dBu' },
  { t: 'Digital outputs sample rate set to 48kHz' },
  { t: 'Set D/A Line-up 0dBFS -> 19,02dBu' },
];

const App: React.FC = () => (
  <>
    <GlobalStyle />
    <Screen>
      <TitleBar>
        <Warn />
        <TitleText>dScope Series III - DA - SNR</TitleText>
        <SysButton>
          <svg width="11" height="11" viewBox="0 0 11 11"><path d="M0 6h11" stroke="#eee" /></svg>
        </SysButton>
        <SysButton>
          <svg width="11" height="12" viewBox="0 0 11 12" fill="none"><path d="M1.500 3.500h7v8h-7zM3.500 3V1h6.500v8H9" stroke="#eee" /></svg>
        </SysButton>
        <SysButton>
          <svg width="12" height="12" viewBox="0 0 12 12"><path d="M1 1l10 10M11 1L1 11" stroke="#eee" /></svg>
        </SysButton>
      </TitleBar>
      <MenuBar>
        {menus.map((m) => (
          <span key={m}>{m}</span>
        ))}
      </MenuBar>
      <ToolRow>
        <ToolStrip $width={1023}>{renderTools(mainTools, ToolButton, ToolSep)}</ToolStrip>
      </ToolRow>
      <QuickBar>
        {quickButtons.map(([label, w]) => (
          <QuickButton key={label} $width={w}>
            {label}
          </QuickButton>
        ))}
      </QuickBar>
      <Desktop>
        <TestWin $x={11} $y={7} $w={319} $h={266}>
          <WhiteHead>
            <Glyph size={16}>
              <rect x="1" y="3" width="18" height="14" fill="#dfe6ee" stroke="#9aa" />
              <rect x="3" y="6" width="6" height="8" fill="#556a7a" />
              <path d="M11 7h6M11 10h6M11 13h6" stroke="#7a8a9a" />
            </Glyph>
            <HeadText>DA Converter Tests</HeadText>
            <HeadGlyph>—</HeadGlyph>
            <HeadGlyph $faint>☐</HeadGlyph>
            <HeadGlyph>✕</HeadGlyph>
          </WhiteHead>
          <ConsoleBox>
            <ConsoleHead>Ready...</ConsoleHead>
            {consoleLines.map((l, i) => (
              <ConsoleLine key={i} $warn={l.warn}>
                {l.t}
              </ConsoleLine>
            ))}
          </ConsoleBox>
          <TestForm>
            <FormRow $h={20}>
              <FormLabel>DAC input mode</FormLabel>
              <Radio $on $lead={4} />
              <RadioText $w={90}>AES3 or S/PDIF</RadioText>
              <Radio />
              <RadioText $w={60}>Soundcard</RadioText>
            </FormRow>
            <FormRow $h={19}>
              <FormLabel>Digital Data:</FormLabel>
              <Combo w={106} value="48 kHz" />
              <Combo w={104} value="24 bit" />
            </FormRow>
            <FormRow $h={22}>
              <FormLabel>Select Audio Test:</FormLabel>
              <Combo w={210} value="Dynamic Range" inset={8} />
            </FormRow>
            <ButtonRow $h={18} $top={3}>
              <FlatButton $w={103}>Results Page</FlatButton>
              <FlatButton $w={103}>Settings Page</FlatButton>
              <FlatButton $w={104}>Help/Info Page</FlatButton>
            </ButtonRow>
            <ButtonRow $h={17}>
              <FlatButton $w={208} $green>Run Test</FlatButton>
              <FlatButton $w={104}>Create Report</FlatButton>
            </ButtonRow>
          </TestForm>
        </TestWin>

        <TraceWin $x={338} $y={2} $w={1537} $h={683}>
          <TraceHead>
            <TraceLogo />
            <TraceTitle>Trace window</TraceTitle>
            <WindowButtons w={31} />
          </TraceHead>
          <TraceTools>
            <TraceStrip $width={680}>{renderTools(traceTools, TraceButton, TraceSep)}</TraceStrip>
          </TraceTools>
          <Chart />
          <PlotFoot />
        </TraceWin>

        <DetectWin $x={3} $y={440} $w={305} $h={152}>
          <DetectHead>
            <Warn fill="#eee" />
            <HeadText>Signal Analyzer Detectors</HeadText>
            <WindowButtons w={31} />
          </DetectHead>
          <DetectBody>
            <DetectGrid $row={15}>
              <span />
              <ColHead>Channel A</ColHead>
              <ColHead>Channel B</ColHead>
              <span />
            </DetectGrid>
            <DetectGrid $row={23.5}>
              <RowLabel>RMS amplitude</RowLabel>
              <ReadOut>-40.719</ReadOut>
              <ReadOut>-40.725</ReadOut>
              <Combo w={67} value="dBu" />
              <RowLabel>Frequency</RowLabel>
              <ReadOut>1000.000</ReadOut>
              <ReadOut>999.996</ReadOut>
              <Combo w={67} value="Hz" />
              <RowLabel>Inter-channel phase</RowLabel>
              <span />
              <ReadOut>26.32</ReadOut>
              <Combo w={67} value="degrees" />
            </DetectGrid>
          </DetectBody>
        </DetectWin>

        <LegendWin $x={14} $y={699} $w={238} $h={97}>
          <LegendHead>
            Legend
            <LegendClose>x</LegendClose>
          </LegendHead>
          <LegendList>
            {legendRows.map((r, i) => (
              <LegendRow key={i}>
                <LegendBox>
                  {r.on && (
                    <svg width="9" height="9" viewBox="0 0 9 9" fill="none">
                      <path d="M1 4l2.500 3L8 1" stroke="#111" strokeWidth="2" />
                    </svg>
                  )}
                </LegendBox>
                <LegendEntry $selected={r.selected}>
                  <TraceIcon mode={r.mode} />
                  <ChanLetter>{r.ch}</ChanLetter>
                  {r.name}
                </LegendEntry>
                <CopyIcon faint={!r.on} />
              </LegendRow>
            ))}
          </LegendList>
        </LegendWin>

        <Reading
          box={{ $x: 462, $y: 714, $w: 322, $h: 153 }}
          frame="#b00000"
          pad={8}
          channel="A"
          size={67}
          closeBg="linear-gradient(#e88070, #c04030)"
          closeColor="#fff"
        />
        <Reading
          box={{ $x: 810, $y: 719, $w: 315, $h: 151 }}
          frame="#bda8ab"
          pad={7}
          channel="B"
          size={65}
          closeBg="linear-gradient(#d2deeb, #c0d0e2)"
          closeColor="#667"
          faint
        />
      </Desktop>
      <StatusBar>
        <StatusHelp>For Help, press F1</StatusHelp>
        <StatusIcon><Glyph size={15}>{icons.gaugeIn}</Glyph></StatusIcon>
        <StatusIcon><Glyph size={15}>{icons.ledIn}</Glyph></StatusIcon>
        <StatusCell $width={39} $gap={3}>
          <CardStack>
            S/card
            <svg width="16" height="6" viewBox="0 0 16 6"><path d="M1 3h13m-3-2 3 2-3 2" stroke="#999" fill="none" /></svg>
          </CardStack>
        </StatusCell>
        <StatusArrow width="10" height="8" viewBox="0 0 10 8">
          <path d="M0 3h6V0l4 4-4 4V5H0z" fill="#111" />
        </StatusArrow>
        <StatusCell $width={52} $gap={0}>Bal/unbal</StatusCell>
        <StatusCell $width={49} $red>XLR</StatusCell>
        <StatusCell $width={31} $red $gap={5}>
          <RateStack>48k<br />16</RateStack>
        </StatusCell>
        <StatusCell $width={11} $red $gap={4}><TinyRed>CS</TinyRed></StatusCell>
        <StatusCell $width={54} $gap={8}>8</StatusCell>
        <StatusCell $width={54} $gap={4} />
        <PageTab $width={43} $bold>Page 1</PageTab>
        <PageTab $width={42} $bold>Page 2</PageTab>
        <PageTab $width={41} $bold>Page 3</PageTab>
        <PageTab $width={39}>Page 4</PageTab>
        <PageTab $width={42}>Page 5</PageTab>
      </StatusBar>
      <BottomStrip />
    </Screen>
  </>
);

export default App;
